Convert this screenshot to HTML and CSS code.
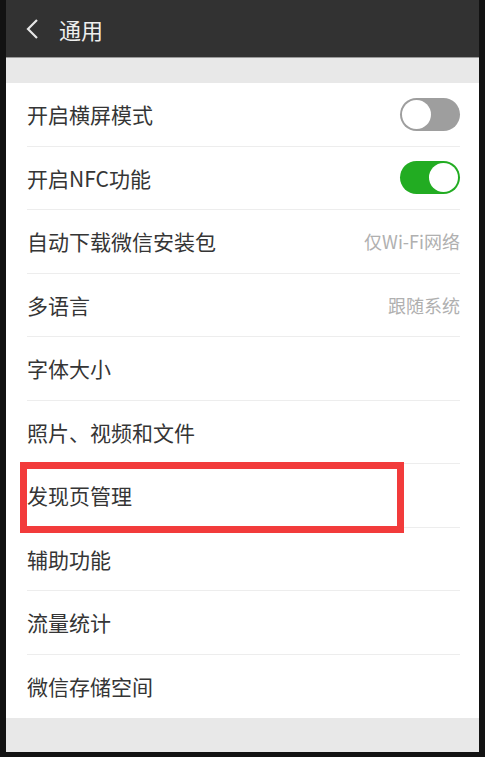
FILE: index.html
```html
<!DOCTYPE html>
<html lang="zh-CN">
<head>
    <meta charset="UTF-8">
    <meta name="viewport" content="width=device-width, initial-scale=1.0">
    <title>通用</title>
    <link rel="stylesheet" href="styles.css">
</head>
<body>

<div class="screen">
    <div class="header">
        <svg class="back" width="14" height="22" viewBox="0 0 14 22">
            <path d="M12 2 L3 11 L12 20" fill="none" stroke="#e6e6e6" stroke-width="2.2"/>
        </svg>
        <span class="title">通用</span>
    </div>
    <div class="gap"></div>
    <ul class="list">
        <li class="item">
            <span class="label">开启横屏模式</span>
            <span class="switch"></span>
        </li>
        <li class="item">
            <span class="label">开启NFC功能</span>
            <span class="switch on"></span>
        </li>
        <li class="item">
            <span class="label">自动下载微信安装包</span>
            <span class="value">仅Wi-Fi网络</span>
        </li>
        <li class="item">
            <span class="label">多语言</span>
            <span class="value">跟随系统</span>
        </li>
        <li class="item"><span class="label">字体大小</span></li>
        <li class="item"><span class="label">照片、视频和文件</span></li>
        <li class="item marked"><span class="label">发现页管理</span></li>
        <li class="item"><span class="label">辅助功能</span></li>
        <li class="item"><span class="label">流量统计</span></li>
        <li class="item"><span class="label">微信存储空间</span></li>
    </ul>
    <div class="footer"></div>
</div>

</body>
</html>
```

FILE: styles.css
```css
html, body {
    margin: 0;
    height: 100%;
}
body {
    background: #121212;
    font-family: "Noto Sans CJK SC", "Noto Sans", sans-serif;
}
.screen {
    margin: 0 6px;
    width: 473px;
    height: 752px;
    background: #e8e8e8;
    display: flex;
    flex-direction: column;
}
.header {
    height: 58px;
    background: #323232;
    border-bottom: 1px solid #9a9a9a;
    display: flex;
    align-items: center;
    padding-left: 19px;
    box-sizing: border-box;
}
.back {
    margin-right: 20px;
}
.title {
    color: #eeeeee;
    font-size: 22px;
}
.gap {
    height: 25px;
}
.list {
    list-style: none;
    margin: 0;
    padding: 0 19px 0 21px;
    background: #fff;
}
.item {
    height: 63.5px;
    display: flex;
    align-items: center;
    justify-content: space-between;
    border-bottom: 1px solid #ededed;
    box-sizing: border-box;
    position: relative;
}
.item:last-child {
    border-bottom: none;
}
.label {
    font-size: 21px;
    color: #353535;
}
.value {
    font-size: 18px;
    color: #b0b0b0;
}
.switch {
    width: 60px;
    height: 33px;
    border-radius: 17px;
    background: #9e9e9e;
    position: relative;
    box-sizing: border-box;
}
.switch::after {
    content: "";
    position: absolute;
    left: 2px;
    top: 2px;
    width: 29px;
    height: 29px;
    border-radius: 50%;
    background: #fff;
}
.switch.on {
    background: #22ac22;
}
.switch.on::after {
    left: auto;
    right: 2px;
}
.marked::before {
    content: "";
    position: absolute;
    left: -7px;
    top: -2px;
    width: 384px;
    height: 71px;
    border: 7px solid #f23b3b;
    box-sizing: border-box;
}
.footer {
    flex: 1;
}
```
